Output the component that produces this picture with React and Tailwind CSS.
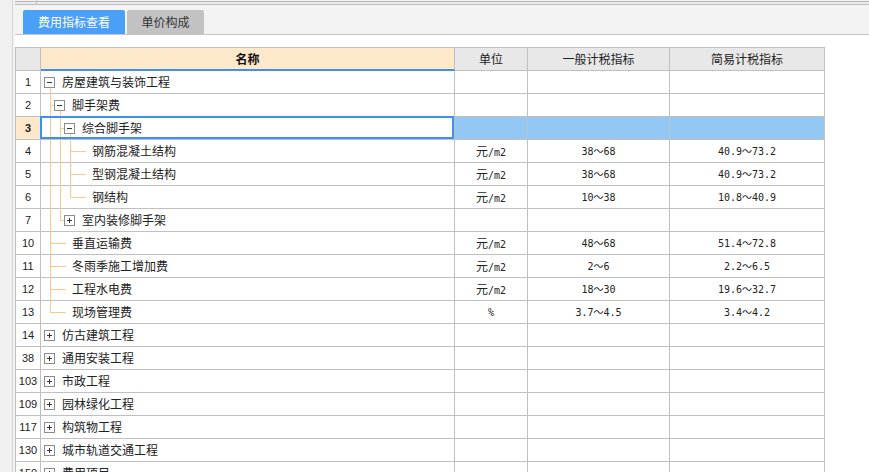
import React from "react";

const cn = '"Noto Sans CJK SC", sans-serif';
const mono = '"DejaVu Sans Mono", "Noto Sans CJK SC", monospace';

const rows = [
  { n: 1, L: 0, kind: "open", name: "房屋建筑与装饰工程", full: [] },
  { n: 2, L: 1, kind: "open", name: "脚手架费", full: [0] },
  { n: 3, L: 2, kind: "open", name: "综合脚手架", full: [0, 1], sel: true },
  { n: 4, L: 3, kind: "leaf", name: "钢筋混凝土结构", full: [0, 1, 2], unit: "元/m2", a: "38～68", b: "40.9～73.2" },
  { n: 5, L: 3, kind: "leaf", name: "型钢混凝土结构", full: [0, 1, 2], unit: "元/m2", a: "38～68", b: "40.9～73.2" },
  { n: 6, L: 3, kind: "leaf", name: "钢结构", full: [0, 1], half: 2, unit: "元/m2", a: "10～38", b: "10.8～40.9" },
  { n: 7, L: 2, kind: "closed", name: "室内装修脚手架", full: [0], half: 1 },
  { n: 10, L: 1, kind: "leaf", name: "垂直运输费", full: [0], unit: "元/m2", a: "48～68", b: "51.4～72.8" },
  { n: 11, L: 1, kind: "leaf", name: "冬雨季施工增加费", full: [0], unit: "元/m2", a: "2～6", b: "2.2～6.5" },
  { n: 12, L: 1, kind: "leaf", name: "工程水电费", full: [0], unit: "元/m2", a: "18～30", b: "19.6～32.7" },
  { n: 13, L: 1, kind: "leaf", name: "现场管理费", full: [], half: 0, unit: "%", a: "3.7～4.5", b: "3.4～4.2" },
  { n: 14, L: 0, kind: "closed", name: "仿古建筑工程", full: [] },
  { n: 38, L: 0, kind: "closed", name: "通用安装工程", full: [] },
  { n: 103, L: 0, kind: "closed", name: "市政工程", full: [] },
  { n: 109, L: 0, kind: "closed", name: "园林绿化工程", full: [] },
  { n: 117, L: 0, kind: "closed", name: "构筑物工程", full: [] },
  { n: 130, L: 0, kind: "closed", name: "城市轨道交通工程", full: [] },
  { n: 150, L: 0, kind: "closed", name: "费用项目", full: [] },
];

const line = "absolute bg-[#fcc88c]";

function Toggle({ L, open }) {
  return (
    <span
      className="absolute top-[6px] w-[11px] h-[11px] border border-[#8c8c8c] bg-white"
      style={{ left: 3 + 10 * L }}
    >
      <span className="absolute left-[2px] top-[4px] w-[5px] h-[1px] bg-[#333]" />
      {!open && <span className="absolute left-[4px] top-[2px] w-[1px] h-[5px] bg-[#333]" />}
    </span>
  );
}

function NameCell({ r }) {
  const { L, kind } = r;
  return (
    <div
      className="relative h-[23px] border-r border-b border-[#c0c0c0] text-[12px] text-[#222] flex items-center"
      style={{ paddingLeft: 21 + 10 * L, fontFamily: cn }}
    >
      {r.full.map((k) => (
        <span key={k} className={`${line} top-0 bottom-[-1px] w-[1px] z-10`} style={{ left: 9 + 10 * k }} />
      ))}
      {r.half != null && (
        <span className={`${line} top-0 h-[12px] w-[1px]`} style={{ left: 9 + 10 * r.half }} />
      )}
      {kind === "open" && (
        <span className={`${line} top-[17px] bottom-[-1px] w-[1px] z-10`} style={{ left: 9 + 10 * L }} />
      )}
      {L > 0 && (
        <span
          className={`${line} top-[11px] h-[1px]`}
          style={{ left: 9 + 10 * (L - 1), width: kind === "leaf" ? 16 : 4 }}
        />
      )}
      {kind !== "leaf" && <Toggle L={L} open={kind === "open"} />}
      <span className="leading-none">{r.name}</span>
      {r.sel && (
        <span className="absolute left-[-1px] top-[-1px] right-0 bottom-0 border-2 border-[#3d8ff0] z-20" />
      )}
    </div>
  );
}

function Unit({ v }) {
  if (!v) return null;
  if (v === "元/m2")
    return (
      <span>
        <span className="text-[12px]" style={{ fontFamily: cn }}>元</span>/m2
      </span>
    );
  return <span>{v}</span>;
}

export default function App() {
  const cell = "h-[23px] border-r border-b border-[#c0c0c0] flex items-center justify-center";
  return (
    <div className="w-[869px] h-[472px] overflow-hidden flex bg-white">
      <div className="w-[13px] shrink-0 bg-[#f0f0f0] border-r border-[#d4d4d4]" />
      <div className="flex-1 flex flex-col pl-[2px] bg-[#f3f3f3]">
        <div className="relative h-[5px] shrink-0">
          <div className="mt-[1px] h-[1px] bg-[#b4b4b4]" />
          <div className="h-[2px] bg-[#ececec]" />
          <div className="h-[1px] bg-[#bcbcbc]" />
          <div className="absolute left-[21px] top-0 h-[4px] w-[1px] bg-[#c4c4c4]" />
        </div>
        <div className="h-[30px] shrink-0 flex items-end gap-[2px] pl-[8px] border-b border-[#c4c4c4]">
          <div
            className="w-[102px] h-[24px] rounded-t-[2px] bg-[#4a9ff6] text-white text-[12px] flex items-center justify-center"
            style={{ fontFamily: cn }}
          >
            费用指标查看
          </div>
          <div
            className="w-[77px] h-[24px] rounded-t-[2px] bg-[#c2c2c2] text-[#333] text-[12px] flex items-center justify-center"
            style={{ fontFamily: cn }}
          >
            单价构成
          </div>
        </div>
        <div className="flex-1 bg-white pt-[12px]">
          <div className="w-[810px] border-t border-l border-[#c0c0c0] grid grid-cols-[25px_414px_73px_142px_155px]">
            <div className={`${cell} bg-[#e8e8e8]`} />
            <div
              className="h-[23px] border-r border-b-2 border-r-[#c0c0c0] border-b-[#3d8ff0] bg-[#fee8ca] flex items-center justify-center text-[12px] font-bold text-[#111]"
              style={{ fontFamily: cn }}
            >
              名称
            </div>
            {["单位", "一般计税指标", "简易计税指标"].map((h) => (
              <div key={h} className={`${cell} bg-[#e8e8e8] text-[12px] text-[#222]`} style={{ fontFamily: cn }}>
                {h}
              </div>
            ))}
            {rows.map((r) => (
              <React.Fragment key={r.n}>
                <div
                  className={`${cell} text-[11px] text-[#222] ${r.sel ? "bg-[#fee8ca] font-bold" : ""}`}
                  style={{ fontFamily: '"Liberation Sans", sans-serif' }}
                >
                  {r.n}
                </div>
                <NameCell r={r} />
                {[r.unit, r.a, r.b].map((v, i) => (
                  <div
                    key={i}
                    className={`${cell} text-[10px] text-[#222] ${r.sel ? "bg-[#93c8f5]" : ""}`}
                    style={{ fontFamily: mono }}
                  >
                    <Unit v={v} />
                  </div>
                ))}
              </React.Fragment>
            ))}
          </div>
        </div>
      </div>
    </div>
  );
}
